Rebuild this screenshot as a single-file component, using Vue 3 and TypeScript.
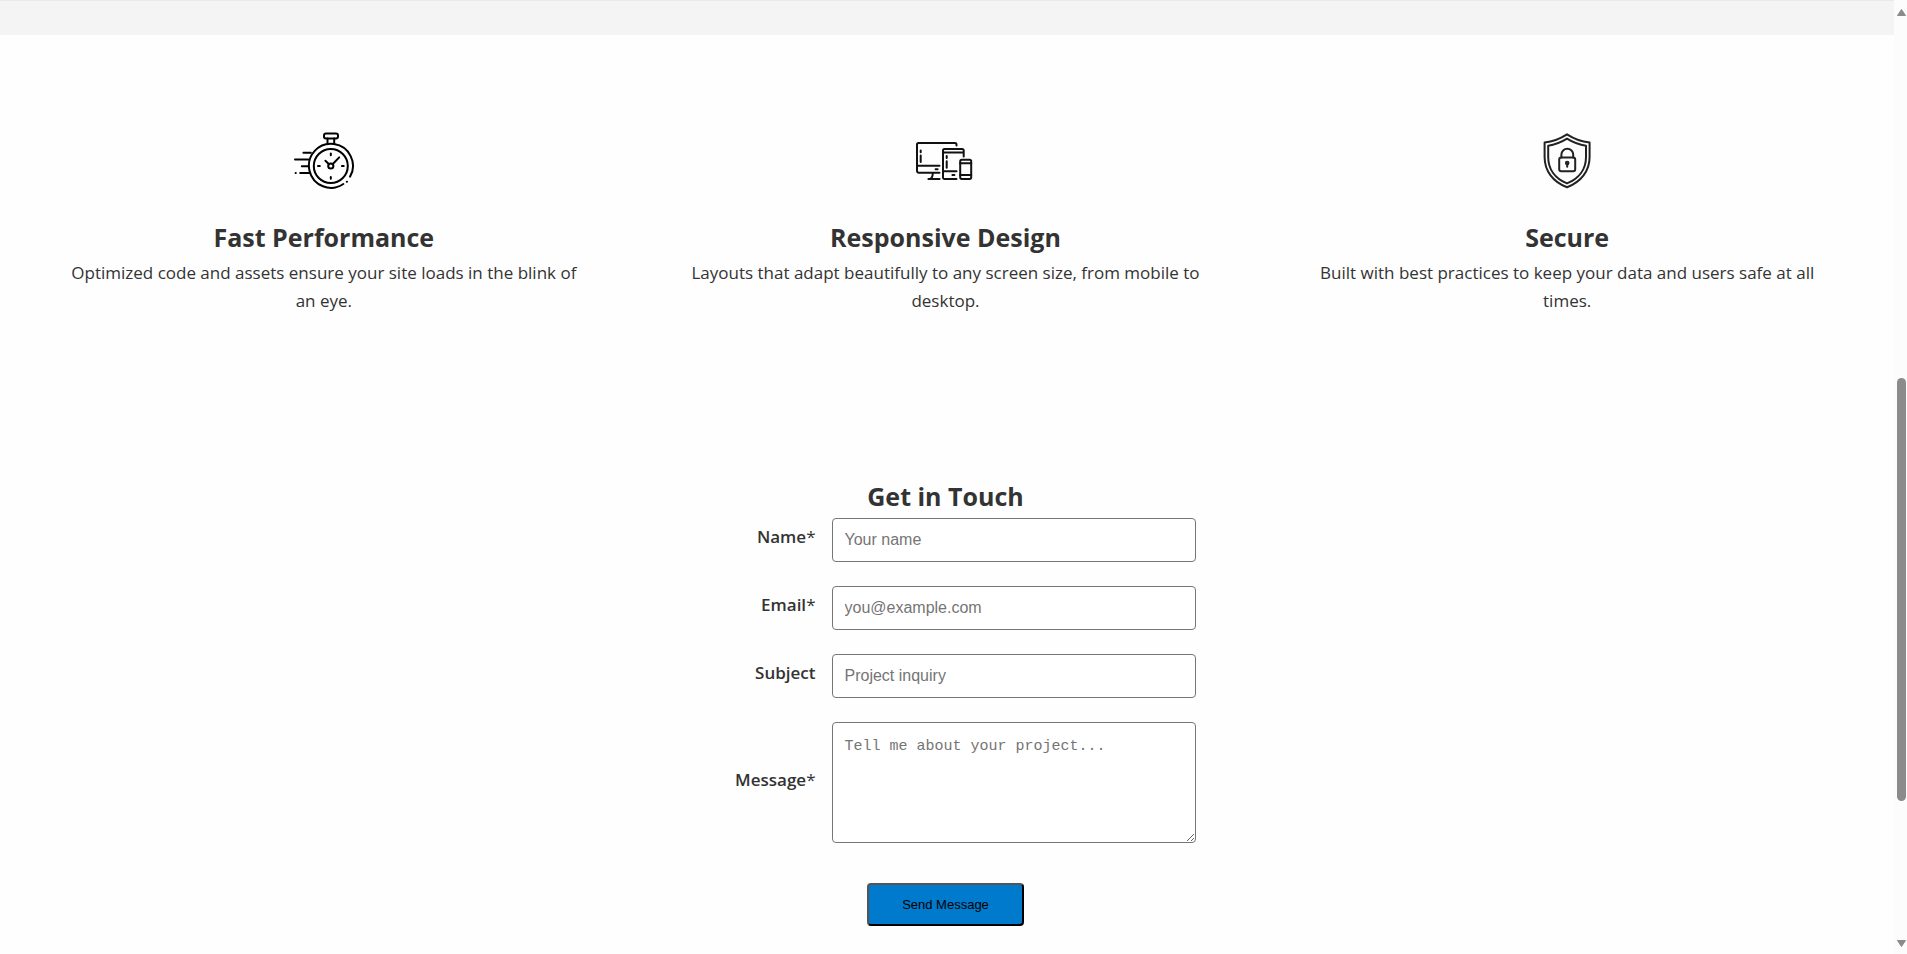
<script setup lang="ts">
import { ref } from 'vue'

interface Feature {
  icon: 'stopwatch' | 'devices' | 'shield'
  title: string
  text: string
}

const features: Feature[] = [
  {
    icon: 'stopwatch',
    title: 'Fast Performance',
    text: 'Optimized code and assets ensure your site loads in the blink of an eye.',
  },
  {
    icon: 'devices',
    title: 'Responsive Design',
    text: 'Layouts that adapt beautifully to any screen size, from mobile to desktop.',
  },
  {
    icon: 'shield',
    title: 'Secure',
    text: 'Built with best practices to keep your data and users safe at all times.',
  },
]

interface Field {
  id: string
  label: string
  type: string
  placeholder: string
  required: boolean
}

const fields: Field[] = [
  { id: 'name', label: 'Name', type: 'text', placeholder: 'Your name', required: true },
  { id: 'email', label: 'Email', type: 'email', placeholder: 'you@example.com', required: true },
  { id: 'subject', label: 'Subject', type: 'text', placeholder: 'Project inquiry', required: false },
]

const values = ref<Record<string, string>>({ name: '', email: '', subject: '', message: '' })
</script>

<template>
  <div class="window">
    <div class="page">
      <div class="band"></div>

      <main>
        <section class="features">
          <article v-for="f in features" :key="f.title" class="feature">
            <svg v-if="f.icon === 'stopwatch'" class="icon icon-bold" viewBox="0 0 64 64" aria-hidden="true">
              <rect x="32" y="4.5" width="14" height="5" rx="2" />
              <path d="M35.5 9.5v5M42.2 9.5v5" />
              <path d="M51.3 55A22 22 0 1 1 58.1 47.6" />
              <circle cx="38.8" cy="37" r="17" />
              <circle cx="38.8" cy="37" r="2.6" />
              <path d="M37 35.2l-3.6-3.4M40.8 35l6.4-6.6" />
              <path d="M38.8 24.4v1.8M38.8 48v1.8M26 37h1.8M49.9 37h1.8" />
              <path d="M11.4 23.7h7.4M3 30.4h13.4M9.8 37.2h6.500M8.2 44h9.4M3.6 44h.2M54.8 52.7h.2" />
            </svg>
            <svg v-else-if="f.icon === 'devices'" class="icon" viewBox="0 0 64 64" aria-hidden="true">
              <path d="M43.5 16.4V15.5a1.5 1.5 0 0 0-1.5-1.5H5.5A1.5 1.5 0 0 0 4 15.5V42a1.8 1.8 0 0 0 1.8 1.8H26.5M4 36.7h22.5" />
              <path d="M22.6 40.3h2M7.7 21.4v1.8M7.7 26.4v6.6" />
              <path d="M19.8 44c0 3-.8 5-2.6 6M15.4 50h11.2" />
              <path d="M50.7 27.5V21.5a1.5 1.5 0 0 0-1.5-1.5H31.5a1.5 1.5 0 0 0-1.5 1.5V48.5a1.5 1.5 0 0 0 1.5 1.5H43.5M30 23.4h20.5M30 42.3h13.5" />
              <path d="M39.4 46h2M33.7 26.9v2M33.7 32.2v6.6" />
              <rect x="47.2" y="30.7" width="11" height="19.2" rx="1.6" />
              <path d="M47.2 34.3h11M47.2 46h11" />
            </svg>
            <svg v-else class="icon icon-soft" viewBox="0 0 64 64" aria-hidden="true">
              <path d="M32 5.3C25 9.8 17.6 12.6 9.6 13.5V28C9.6 42 18 53 32 58.3C46 53 54.6 42 54.6 28V13.5C46.6 12.6 39 9.8 32 5.3Z" />
              <path d="M32 9.6C26 13.3 20 15.7 13.2 16.7V28C13.2 40 20 49.6 32 54.4C44 49.6 51 40 51 28V16.7C44 15.7 38 13.3 32 9.6Z" />
              <rect x="24.2" y="28.6" width="16" height="13.6" rx="2" />
              <path d="M26.4 28.6V25.6a5.9 5.9 0 0 1 11.8 0V28.6" />
              <circle cx="32.2" cy="34" r="1.3" />
              <path d="M32.2 35v2.7" />
            </svg>
            <h3>{{ f.title }}</h3>
            <p>{{ f.text }}</p>
          </article>
        </section>

        <section class="contact">
          <h2>Get in Touch</h2>
          <form @submit.prevent>
            <div v-for="field in fields" :key="field.id" class="row">
              <label :for="field.id">{{ field.label }}<span v-if="field.required">*</span></label>
              <input
                :id="field.id"
                v-model="values[field.id]"
                :type="field.type"
                :placeholder="field.placeholder"
              />
            </div>
            <div class="row">
              <label for="message">Message<span>*</span></label>
              <textarea id="message" v-model="values.message" placeholder="Tell me about your project..."></textarea>
            </div>
            <button type="submit">Send Message</button>
          </form>
        </section>
      </main>
    </div>

    <div class="scrollbar" aria-hidden="true">
      <svg class="arrow" viewBox="0 0 9 7"><path d="M4.5 0.5L8.5 6.5H0.5Z" /></svg>
      <div class="track"><div class="thumb"></div></div>
      <svg class="arrow" viewBox="0 0 9 7"><path d="M4.5 6.5L8.5 0.5H0.5Z" /></svg>
    </div>
  </div>
</template>

<style>
body {
  margin: 0;
  background: #fefefe;
}
</style>

<style scoped>
* {
  box-sizing: border-box;
}

.window {
  display: flex;
  min-height: 100vh;
  color: #333;
  font-family: 'Segoe UI', 'Open Sans', 'Noto Sans', sans-serif;
  font-size: 17px;
  line-height: 28px;
}

.page {
  flex: 1;
}

.band {
  height: 35px;
  background: #f4f4f4;
  border-top: 1px solid #eaeaea;
}

main {
  padding: 0 32px 0 29px;
}

.features {
  display: grid;
  grid-template-columns: repeat(3, 1fr);
  gap: 32px;
  padding: 94px 0 80px;
}

.feature {
  padding: 0 32px;
  text-align: center;
}

.icon {
  display: block;
  width: 64px;
  height: 64px;
  margin: 0 auto 23px;
  fill: none;
  stroke: #111;
  stroke-width: 2;
  stroke-linecap: round;
  stroke-linejoin: round;
}

.icon-bold {
  stroke: #000;
}

.icon-soft {
  stroke: #222;
}

h2,
h3 {
  margin: 0;
  font-size: 25px;
  line-height: 43px;
  font-weight: 700;
  text-align: center;
}

p {
  margin: 0;
}

.contact {
  padding: 80px 0 28px;
}

form {
  display: flex;
  flex-direction: column;
  align-items: center;
  gap: 24px;
}

.row {
  display: grid;
  grid-template-columns: 120px 364px;
  column-gap: 16px;
  align-items: center;
  width: 500px;
}

label {
  padding-bottom: 6px;
  font-weight: 600;
  text-align: right;
}

label span {
  font-weight: 400;
}

input,
textarea {
  display: block;
  width: 100%;
  margin: 0;
  padding: 12px;
  border: 1px solid #767676;
  border-radius: 4px;
  background: #fff;
  color: #333;
}

input {
  height: 44px;
  font: 16px 'Liberation Sans', Arial, sans-serif;
}

textarea {
  height: 121px;
  padding-top: 15px;
  font: 15px 'Liberation Mono', monospace;
  resize: vertical;
}

input::placeholder,
textarea::placeholder {
  color: #757575;
}

button {
  width: 157px;
  height: 43px;
  margin-top: 16px;
  padding: 0;
  border: 2px outset #000;
  border-radius: 4px;
  background: #007acc;
  color: #000;
  font: 13px 'Liberation Sans', Arial, sans-serif;
}

.scrollbar {
  display: flex;
  flex-direction: column;
  align-items: center;
  gap: 4px;
  width: 13px;
  padding: 9px 1px 7px 3px;
  background: #fcfcfc;
}

.arrow {
  width: 9px;
  height: 7px;
  fill: #8b8b8b;
  stroke: #8b8b8b;
  stroke-linejoin: round;
}

.track {
  display: flex;
  flex: 1;
  flex-direction: column;
}

.track::before {
  content: '';
  flex: 358;
}

.track::after {
  content: '';
  flex: 135;
}

.thumb {
  flex: 423;
  width: 9px;
  border-radius: 5px;
  background: #8b8b8b;
}
</style>
